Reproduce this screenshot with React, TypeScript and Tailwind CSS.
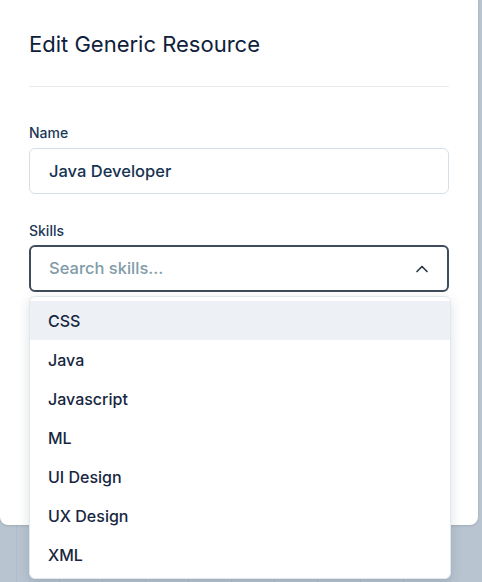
import { ChevronUp } from "lucide-react";

const skills = ["CSS", "Java", "Javascript", "ML", "UI Design", "UX Design", "XML"];

export default function App() {
  return (
    <div
      className="relative h-[582px] w-[482px] overflow-hidden bg-[#b8c5d1]"
      style={{ fontFamily: "Inter, 'Noto Sans', sans-serif" }}
    >
      {/* Background table lines (dimmed page behind modal) */}
      <div className="flex h-full pl-[16px]">
        {Array.from({ length: 11 }).map((_, i) => (
          <div key={i} className="h-full w-[43px] shrink-0 border-l border-[#aebccb]" />
        ))}
      </div>

      {/* Modal */}
      <div className="absolute left-0 top-[-8px] h-[533px] w-[478px] rounded-lg bg-white px-[29px] pt-[37px] shadow-sm">
        <h2 className="text-[22px] leading-[30px] text-[#0f213a]">Edit Generic Resource</h2>
        <div className="mt-[27px] h-px bg-[#e6ebf0]" />

        <div className="mt-[37px]">
          <label className="block text-[14px] font-medium leading-[18px] text-[#1c3857]">Name</label>
          <div className="mt-[6px] flex h-[46px] items-center rounded-md border border-[#d6dfe8] px-[19px] text-[16.5px] font-medium text-[#163353]">
            Java Developer
          </div>
        </div>

        <div className="mt-[28px]">
          <label className="block text-[14px] font-medium leading-[18px] text-[#1c3857]">Skills</label>
          <div className="mt-[5px] flex h-[47px] items-center justify-between rounded-md border-2 border-[#3f4c5c] pl-[18px] pr-[15px]">
            <span className="text-[16.5px] font-medium text-[#7f9ca8]">Search skills...</span>
            <ChevronUp className="h-[20px] w-[20px] text-[#2a3646]" strokeWidth={2} />
          </div>
        </div>
      </div>

      {/* Dropdown list */}
      <div className="absolute left-[29px] top-[296px] w-[422px] rounded-md border border-[#e3e8ee] bg-white py-[4px] shadow-[0_4px_12px_rgba(15,33,58,0.15)]">
        {skills.map((s, i) => (
          <div
            key={s}
            className={`flex h-[39px] items-center px-[18px] text-[16px] font-medium text-[#172640] ${
              i === 0 ? "bg-[#edf1f5]" : ""
            }`}
          >
            {s}
          </div>
        ))}
      </div>
    </div>
  );
}
